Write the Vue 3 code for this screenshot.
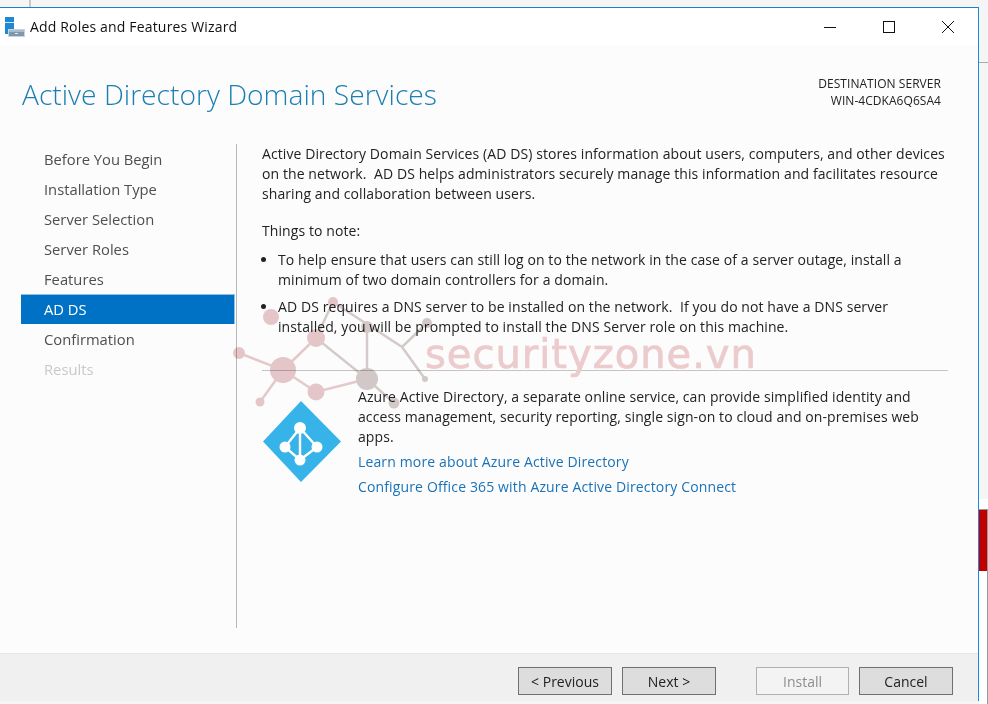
<template>
  <div class="screen">
    <div class="top-strip"><span class="top-tick"></span></div>
    <div class="desk">
      <div class="wizard">
        <div class="titlebar">
          <svg class="app-icon" width="20" height="20" viewBox="0 0 20 20">
            <rect x="0" y="0" width="9" height="17" fill="#1e88d2" />
            <rect x="0" y="5" width="9" height="1" fill="#cfe6f7" />
            <rect x="3.5" y="12.5" width="16" height="7" fill="#7f97ad" stroke="#c5d3df" />
            <rect x="4" y="13" width="15" height="2" fill="#a9bbcb" />
            <rect x="10" y="16" width="3" height="1" fill="#e8eef3" />
          </svg>
          <span class="app-title">Add Roles and Features Wizard</span>
          <div class="win-buttons">
            <svg width="12" height="12" viewBox="0 0 12 12"><path d="M0 6.5H12" stroke="#111" fill="none" /></svg>
            <svg width="12" height="12" viewBox="0 0 12 12"><rect x="0.5" y="0.5" width="11" height="11" stroke="#111" fill="none" /></svg>
            <svg width="12" height="12" viewBox="0 0 12 12"><path d="M0 0L12 12M12 0L0 12" stroke="#111" fill="none" /></svg>
          </div>
        </div>

        <div class="main">
          <header class="page-head">
            <h1>Active Directory Domain Services</h1>
            <div class="dest">DESTINATION SERVER<br />WIN-4CDKA6Q6SA4</div>
          </header>

          <div class="columns">
            <nav class="steps">
              <div
                v-for="step in steps"
                :key="step.name"
                class="step"
                :class="{ active: step.active, off: step.off }"
              >{{ step.name }}</div>
            </nav>

            <section class="content">
              <p class="intro">Active Directory Domain Services (AD DS) stores information about users, computers, and other devices on the network.&nbsp; AD DS helps administrators securely manage this information and facilitates resource sharing and collaboration between users.</p>
              <p class="note-head">Things to note:</p>
              <ul class="notes">
                <li>To help ensure that users can still log on to the network in the case of a server outage, install a minimum of two domain controllers for a domain.</li>
                <li>AD DS requires a DNS server to be installed on the network.&nbsp; If you do not have a DNS server<br />installed, you will be prompted to install the DNS Server role on this machine.</li>
              </ul>
              <div class="rule"></div>
              <div class="azure">
                <svg class="azure-logo" width="78" height="81" viewBox="0 0 78 81">
                  <path d="M38 0L78 40.5L38 81L0 40.5Z" fill="#36b3e8" />
                  <g stroke="#fff" stroke-width="2.4" fill="none">
                    <path d="M37 27L22 46L37 59L54 46Z" />
                    <path d="M37 27V59" />
                  </g>
                  <g fill="#fff">
                    <circle cx="37" cy="27" r="6" />
                    <circle cx="22" cy="46" r="5.5" />
                    <circle cx="54" cy="46" r="5.5" />
                    <circle cx="37" cy="59" r="5.5" />
                  </g>
                </svg>
                <div class="azure-text">
                  <p>Azure Active Directory, a separate online service, can provide simplified identity and access management, security reporting, single sign-on to cloud and on-premises web apps.</p>
                  <a class="link">Learn more about Azure Active Directory</a>
                  <a class="link">Configure Office 365 with Azure Active Directory Connect</a>
                </div>
              </div>
            </section>
          </div>
        </div>

        <footer class="actions">
          <button class="btn">&lt; Previous</button>
          <button class="btn next">Next &gt;</button>
          <button class="btn install" disabled>Install</button>
          <button class="btn">Cancel</button>
        </footer>
      </div>

      <aside class="behind">
        <div class="behind-line"></div>
        <div class="behind-gap"></div>
        <div class="behind-panel">
          <div class="behind-frame"><div class="red"></div></div>
        </div>
      </aside>
    </div>

    <!-- watermark on top of the screenshot -->
    <svg class="mark" width="240" height="130" viewBox="230 295 240 130">
      <g fill="none" stroke-width="2.5">
        <path d="M239 353L283 370L260 402M283 370L316 338M283 370L316 392L367 379" stroke="#e8cccd" />
        <path d="M333 302L316 338L367 379L394 403M367 327V379M333 302L402 347L425 379M402 347L427 323" stroke="#d8cdcd" />
      </g>
      <g fill="#e8c9cb">
        <circle cx="271" cy="317" r="8" />
        <circle cx="239" cy="353" r="6" />
        <circle cx="283" cy="370" r="13" />
        <circle cx="260" cy="402" r="4.5" />
        <circle cx="316" cy="338" r="9" />
        <circle cx="316" cy="392" r="8.5" />
        <circle cx="333" cy="302" r="5" />
      </g>
      <g fill="#d6cbcb">
        <circle cx="367" cy="379" r="11" />
        <circle cx="367" cy="327" r="6" />
        <circle cx="394" cy="403" r="5.5" />
        <circle cx="427" cy="323" r="5" />
        <circle cx="425" cy="379" r="3" />
      </g>
    </svg>
    <div class="mark-text">securityzone.vn</div>
  </div>
</template>

<script setup>
const steps = [
  { name: 'Before You Begin' },
  { name: 'Installation Type' },
  { name: 'Server Selection' },
  { name: 'Server Roles' },
  { name: 'Features' },
  { name: 'AD DS', active: true },
  { name: 'Confirmation' },
  { name: 'Results', off: true }
]
</script>

<style>
html, body {
  margin: 0;
  background: #fff;
}
</style>

<style scoped>
.screen {
  position: relative;
  width: 988px;
  height: 704px;
  overflow: hidden;
  font-family: "Open Sans", "Noto Sans", sans-serif;
  font-size: 14px;
  color: #222;
  background: #f5f5f5;
}
.top-strip {
  height: 7px;
  background: #f5f5f5;
}
.top-tick {
  display: block;
  margin-left: 29px;
  width: 2px;
  height: 7px;
  background: #c8c8c8;
}
.desk {
  display: flex;
  height: 697px;
}
.wizard {
  width: 978px;
  height: 693px;
  display: flex;
  flex-direction: column;
  border-top: 1px solid #1a7fcb;
  border-right: 1px solid #1a8ae0;
  background: #fcfcfc;
}
.titlebar {
  height: 37px;
  flex: none;
  display: flex;
  align-items: center;
  background: #fff;
  padding-left: 5px;
}
.app-icon {
  margin-right: 5px;
}
.app-title {
  font-size: 14px;
  letter-spacing: 0.17px;
  color: #111;
}
.win-buttons {
  margin-left: auto;
  margin-right: 24px;
  display: flex;
  gap: 47px;
}
.main {
  flex: 1;
  display: flex;
  flex-direction: column;
  min-height: 0;
}
.page-head {
  height: 99px;
  flex: none;
  display: flex;
  justify-content: space-between;
  padding: 0 37px 0 22px;
}
h1 {
  margin: 27px 0 0;
  font-size: 28.2px;
  line-height: 44px;
  font-weight: 300;
  color: #1b7fb2;
}
.dest {
  margin-top: 30px;
  font-size: 12px;
  line-height: 17px;
  letter-spacing: 0.05px;
  text-align: right;
  color: #222;
}
.columns {
  flex: 1;
  display: flex;
  min-height: 0;
}
.steps {
  width: 214px;
  margin-left: 21px;
  flex: none;
}
.step {
  height: 30px;
  line-height: 30px;
  padding-left: 23px;
  font-size: 14.75px;
  color: #4f4f4f;
}
.step.active {
  background: #0072c6;
  box-shadow: inset 0 1px #8fc0e6, inset -1px 0 #8fc0e6;
  color: #fff;
}
.step.off {
  color: #c9c9c9;
}
.content {
  margin-left: 1px;
  width: 686px;
  height: 484px;
  border-left: 1px solid #b8b8b8;
  padding: 0 30px 0 25px;
  line-height: 20px;
  letter-spacing: 0.09px;
}
p {
  margin: 0;
}
.intro {
  margin-bottom: 17px;
}
.note-head {
  margin-bottom: 9px;
}
.notes {
  margin: 0 0 33px;
  padding: 0 0 0 16px;
}
.notes li {
  margin-bottom: 7px;
}
.rule {
  height: 1px;
  background: #c4c4c4;
  margin-bottom: 16px;
}
.azure {
  display: flex;
}
.azure-logo {
  flex: none;
  margin: 14px 17px 0 1px;
}
.azure-text p {
  margin-bottom: 2px;
}
.link {
  display: block;
  color: #1a72b8;
  height: 25px;
  line-height: 25px;
  letter-spacing: 0.14px;
}
.actions {
  height: 48px;
  box-sizing: border-box;
  flex: none;
  border-top: 1px solid #e6e6e6;
  background: #f0f0f0;
  display: flex;
  align-items: flex-start;
  padding: 13px 0 0 518px;
  gap: 10px;
}
.btn {
  width: 94px;
  height: 28px;
  border: 1px solid #707070;
  background: #dddddd;
  font-family: inherit;
  font-size: 14px;
  color: #222;
  padding: 0;
}
.next {
  margin-right: 30px;
}
.install {
  width: 93px;
  border-color: #adb2b5;
  background: #f3f3f3;
  color: #8d8d8d;
}
.behind {
  width: 9px;
  flex: none;
  display: flex;
  flex-direction: column;
}
.behind-line {
  height: 55px;
  border-bottom: 1px solid #aaa;
}
.behind-gap {
  height: 436px;
  background: #f5f5f5;
}
.behind-panel {
  flex: 1;
  background: #fff;
  padding-top: 10px;
  display: flex;
  flex-direction: column;
}
.behind-frame {
  flex: 1;
  border-top: 1px solid #999;
  border-right: 1px solid #999;
}
.red {
  height: 61px;
  background: #c00000;
}
.mark {
  position: absolute;
  left: 230px;
  top: 295px;
  mix-blend-mode: multiply;
  pointer-events: none;
}
.mark-text {
  position: absolute;
  left: 425px;
  top: 339px;
  font-family: "DejaVu Sans", sans-serif;
  font-size: 40px;
  line-height: 30px;
  letter-spacing: 1px;
  color: #eccbcd;
  -webkit-text-stroke: 0.7px #eccbcd;
  white-space: nowrap;
}
</style>
